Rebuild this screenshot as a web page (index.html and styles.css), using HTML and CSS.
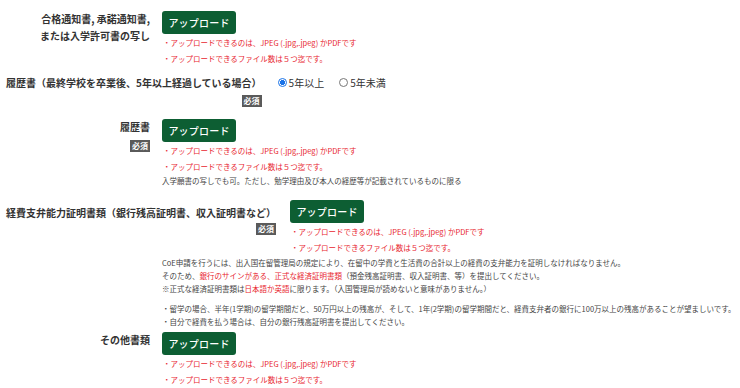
FILE: index.html
```html
<!DOCTYPE html>
<html lang="ja">
<head>
<meta charset="utf-8">
<link rel="stylesheet" href="styles.css">
</head>
<body>
<div class="form">
  <div class="row">
    <div class="label">合格通知書, 承諾通知書,<br>または入学許可書の写し</div>
    <div class="field">
      <button class="upload">アップロード</button>
      <ul class="notes">
        <li>・アップロードできるのは、JPEG (.jpg,.jpeg) かPDFです</li>
        <li>・アップロードできるファイル数は５つ迄です。</li>
      </ul>
    </div>
  </div>

  <div class="row q-row">
    <div class="q-label">
      <div class="title">履歴書（最終学校を卒業後、5年以上経過している場合）</div>
      <span class="badge">必須</span>
    </div>
    <div class="radios">
      <span class="radio checked"></span><span class="radio-text">5年以上</span>
      <span class="radio"></span><span class="radio-text">5年未満</span>
    </div>
  </div>

  <div class="row row-cv">
    <div class="label">履歴書<br><span class="badge">必須</span></div>
    <div class="field">
      <button class="upload">アップロード</button>
      <ul class="notes">
        <li>・アップロードできるのは、JPEG (.jpg,.jpeg) かPDFです</li>
        <li>・アップロードできるファイル数は５つ迄です。</li>
      </ul>
      <p class="help">入学願書の写しでも可。ただし、勉学理由及び本人の経歴等が記載されているものに限る</p>
    </div>
  </div>

  <div class="row q-row2">
    <div class="q-label">
      <div class="title">経費支弁能力証明書類（銀行残高証明書、収入証明書など）</div>
      <span class="badge">必須</span>
    </div>
    <div class="field">
      <button class="upload">アップロード</button>
      <ul class="notes">
        <li>・アップロードできるのは、JPEG (.jpg,.jpeg) かPDFです</li>
        <li>・アップロードできるファイル数は５つ迄です。</li>
      </ul>
    </div>
  </div>
  <div class="desc">
    <p>CoE申請を行うには、出入国在留管理局の規定により、在留中の学費と生活費の合計以上の経費の支弁能力を証明しなければなりません。<br>そのため、<span class="red">銀行のサインがある、正式な経済証明書類</span>（預金残高証明書、収入証明書、等）を提出してください。<br>※正式な経済証明書類は<span class="red">日本語か英語</span>に限ります。（入国管理局が読めないと意味がありません。）</p>
    <p>・留学の場合、半年(1学期)の留学期間だと、50万円以上の残高が、そして、1年(2学期)の留学期間だと、経費支弁者の銀行に100万以上の残高があることが望ましいです。<br>・自分で経費を払う場合は、自分の銀行残高証明書を提出してください。</p>
  </div>

  <div class="row row-other">
    <div class="label">その他書類</div>
    <div class="field">
      <button class="upload">アップロード</button>
      <ul class="notes">
        <li>・アップロードできるのは、JPEG (.jpg,.jpeg) かPDFです</li>
        <li>・アップロードできるファイル数は５つ迄です。</li>
      </ul>
    </div>
  </div>
</div>
</body>
</html>
```
FILE: styles.css
```css
* { box-sizing: border-box; }
html, body { background: #fff; }
body {
  margin: 0;
  padding: 8px 6px 0 6px;
  font-family: "Noto Sans CJK JP", "Noto Sans", sans-serif;
  color: #333;
}
.form { display: flex; flex-direction: column; }
.row { display: flex; align-items: flex-start; gap: 12px; }
.label {
  width: 144px;
  text-align: right;
  font-size: 10px;
  font-weight: bold;
  line-height: 17px;
  padding-top: 2px;
}
.field { display: flex; flex-direction: column; align-items: flex-start; }
.upload {
  margin: 3px 0 0 0;
  width: 74px;
  height: 23px;
  padding: 0;
  border: none;
  border-radius: 3px;
  background: #0d5e33;
  color: #fff;
  font-family: inherit;
  font-size: 10px;
  font-weight: 500;
  letter-spacing: 0.2px;
  cursor: pointer;
}
.notes {
  list-style: none;
  margin: 0;
  padding: 1px 0 0 1px;
  color: #e8262f;
  font-size: 7.5px;
  line-height: 16px;
}
.help {
  margin: 0;
  font-size: 7.5px;
  line-height: 12px;
  color: #444;
}
.badge {
  display: inline-block;
  background: #5a5a5a;
  color: #fff;
  font-size: 8px;
  font-weight: bold;
  line-height: 12px;
  height: 12px;
  padding: 0 2px;
  margin-top: 4px;
  vertical-align: top;
}
.q-row { margin-top: 7px; gap: 16px; }
.q-label { display: flex; flex-direction: column; align-items: flex-end; }
.title {
  font-size: 10px;
  font-weight: bold;
  line-height: 17px;
}
.radios {
  display: flex;
  align-items: center;
  height: 17px;
  font-size: 10px;
}
.radio {
  width: 9px;
  height: 9px;
  border-radius: 50%;
  border: 1px solid #777;
  background: #fff;
  margin-right: 2px;
}
.radio.checked {
  border: 1px solid #1a73e8;
  background: radial-gradient(circle, #1a73e8 0 2.4px, #fff 2.8px);
}
.radio-text { margin-right: 15px; }
.row-cv { margin-top: 9px; }
.row-cv .badge { margin-top: 5px; }
.q-row2 { margin-top: 13px; gap: 14px; }
.q-row2 .title { padding-top: 4px; }
.q-row2 .badge { margin-top: 2px; }
.q-row2 .upload { margin-top: 0; }
.desc {
  margin-left: 156px;
  margin-top: 0;
  font-size: 7.5px;
  line-height: 13px;
  color: #444;
}
.desc p { margin: 0 0 7px 0; white-space: nowrap; }
.desc p:last-child { margin-bottom: 0; }
.red { color: #e8262f; }
.row-other { margin-top: 1px; }
```
